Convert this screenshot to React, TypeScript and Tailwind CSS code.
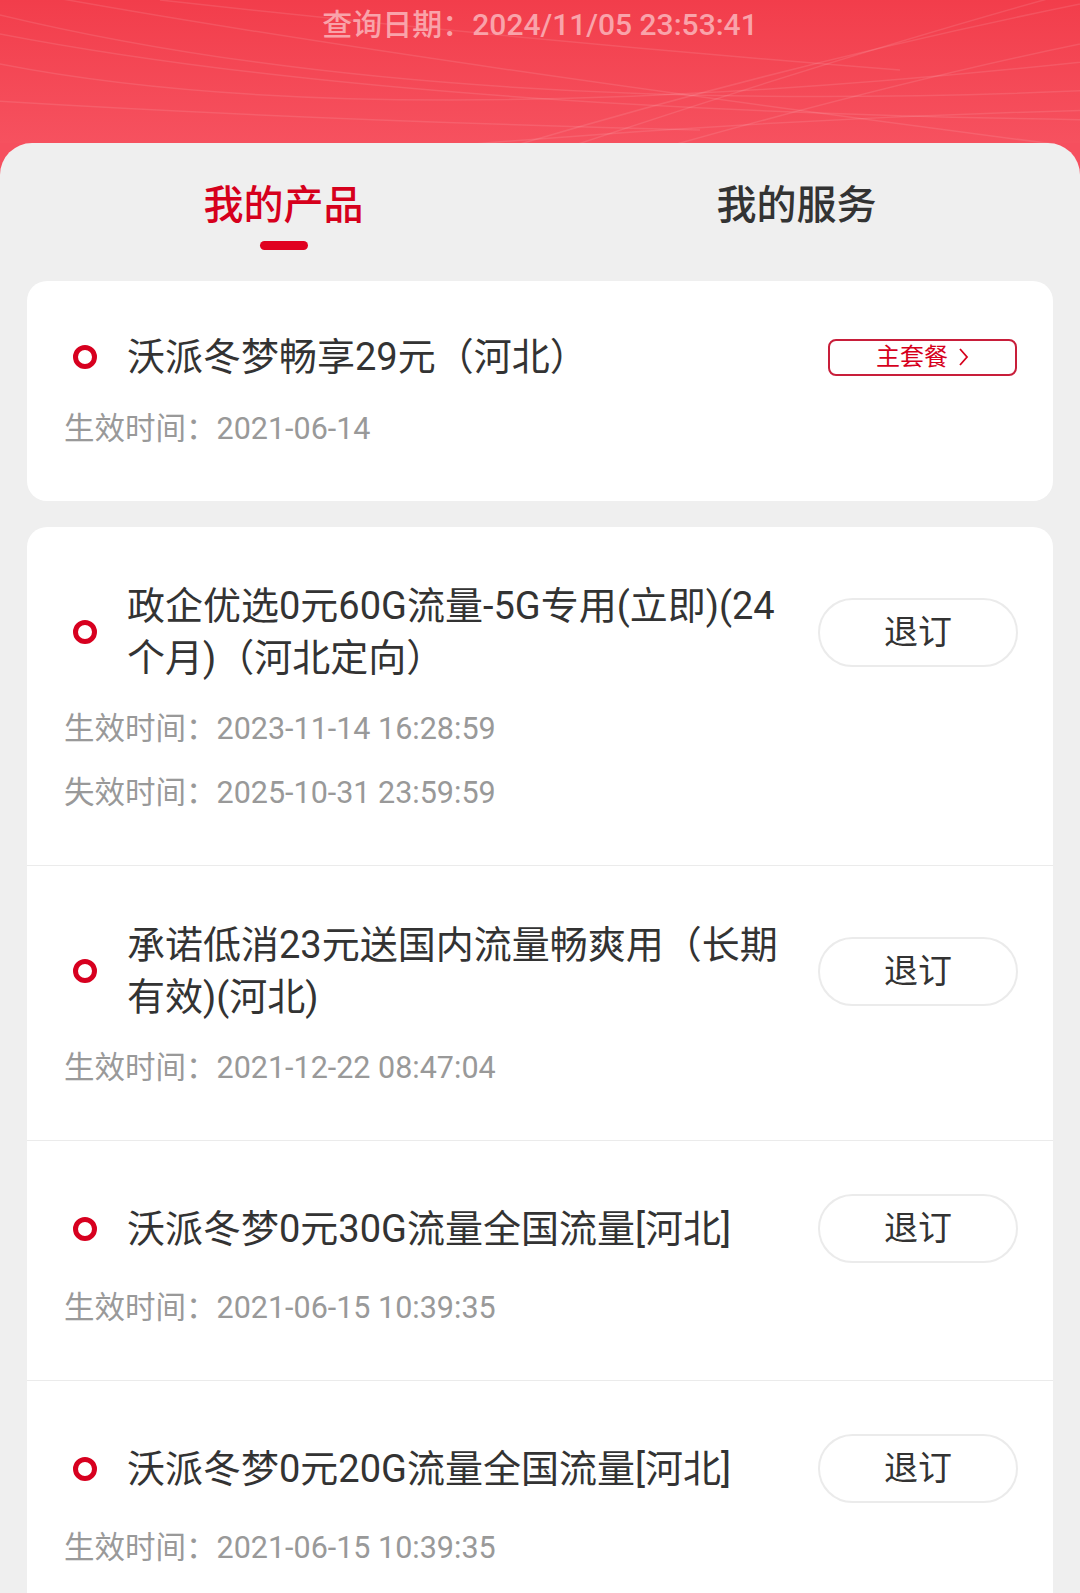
import React from 'react';

type Product = {
  id: number;
  title: string;
  dates: string[];
};

const products: Product[] = [
  {
    id: 1,
    title: '政企优选0元60G流量-5G专用(立即)(24个月)（河北定向）',
    dates: ['生效时间：2023-11-14 16:28:59', '失效时间：2025-10-31 23:59:59'],
  },
  {
    id: 2,
    title: '承诺低消23元送国内流量畅爽用（长期有效)(河北)',
    dates: ['生效时间：2021-12-22 08:47:04'],
  },
  {
    id: 3,
    title: '沃派冬梦0元30G流量全国流量[河北]',
    dates: ['生效时间：2021-06-15 10:39:35'],
  },
  {
    id: 4,
    title: '沃派冬梦0元20G流量全国流量[河北]',
    dates: ['生效时间：2021-06-15 10:39:35'],
  },
];

function Dot() {
  return <span className="ml-[9px] mr-[30px] h-[24px] w-[24px] shrink-0 rounded-full border-[5px] border-[#d7001f]" />;
}

function HeaderLines() {
  return (
    <svg className="absolute inset-0 h-full w-full" viewBox="0 0 1080 143" preserveAspectRatio="none" fill="none">
      <g stroke="#ffffff" strokeOpacity="0.1" strokeWidth="1.5">
        <path d="M-20 10 Q 420 120 1100 90" />
        <path d="M-20 30 Q 380 110 1100 120" />
        <path d="M-20 60 Q 360 140 1100 60" />
        <path d="M-20 100 Q 300 120 700 130" />
        <path d="M40 -5 Q 400 60 1100 150" />
        <path d="M160 0 Q 520 40 900 70" />
        <path d="M500 150 Q 800 60 1100 0" />
        <path d="M560 150 Q 860 50 1080 -10" />
        <path d="M620 160 Q 900 80 1100 40" />
        <path d="M300 160 Q 700 120 1100 110" />
      </g>
    </svg>
  );
}

export default function App() {
  return (
    <div className="min-h-screen bg-[#f64f5e] font-['Roboto','Noto_Sans_CJK_SC',sans-serif]">
      <header className="relative h-[143px] overflow-hidden bg-gradient-to-b from-[#f23d4b] to-[#f6515f]">
        <HeaderLines />
        <p className="relative pt-[4px] text-center text-[30px] leading-[42px] font-medium text-[#f9a3aa]">
          查询日期：2024/11/05 23:53:41
        </p>
      </header>

      <main className="min-h-[1450px] rounded-t-[32px] bg-[#efefef] px-[27px] pb-10">
        <div className="flex pt-[35px]">
          <div className="flex flex-1 flex-col items-center">
            <span className="text-[40px] leading-[56px] font-medium text-[#d6001c]">我的产品</span>
            <span className="mt-[7px] h-[9px] w-[48px] rounded-full bg-[#e0001f]" />
          </div>
          <div className="flex flex-1 flex-col items-center">
            <span className="text-[40px] leading-[56px] font-medium text-[#333333]">我的服务</span>
          </div>
        </div>

        <section className="mt-[31px] rounded-[20px] bg-white pt-[50px] pb-[51px] pl-[37px] pr-[36px]">
          <div className="flex min-h-[52px] items-center">
            <Dot />
            <h3 className="flex-1 text-[38px] leading-[52px] font-normal text-[#333333]">沃派冬梦畅享29元（河北）</h3>
            <button className="flex h-[37px] w-[189px] items-center justify-center gap-[10px] rounded-[8px] border-2 border-[#c81e3a] text-[24px] leading-none text-[#d6001c]">
              主套餐
              <svg width="11" height="20" viewBox="0 0 11 20" fill="none">
                <path d="M2 2 L9 10 L2 18" stroke="#d6001c" strokeWidth="1.8" />
              </svg>
            </button>
          </div>
          <p className="mt-[25px] text-[30.5px] leading-[42px] text-[#999999]">生效时间：2021-06-14</p>
        </section>

        <section className="mt-[26px] rounded-t-[20px] bg-white">
          {products.map((p, i) => (
            <div
              key={p.id}
              className={`pt-[53px] pb-[51px] pl-[37px] pr-[35px] ${i > 0 ? 'border-t border-[#ebebeb]' : ''}`}
            >
              <div className="flex min-h-[69px] items-center">
                <Dot />
                <h3 className="mr-[19px] min-w-0 flex-1 text-[38px] leading-[52px] font-normal text-[#333333]">{p.title}</h3>
                <button className="h-[69px] w-[200px] shrink-0 rounded-full border-2 border-[#ebebeb] text-[34px] text-[#333333]">
                  退订
                </button>
              </div>
              {p.dates.map((d, j) => (
                <p
                  key={d}
                  className={`${j === 0 ? 'mt-[24px]' : 'mt-[22px]'} text-[30.5px] leading-[42px] text-[#999999]`}
                >
                  {d}
                </p>
              ))}
            </div>
          ))}
        </section>
      </main>
    </div>
  );
}
